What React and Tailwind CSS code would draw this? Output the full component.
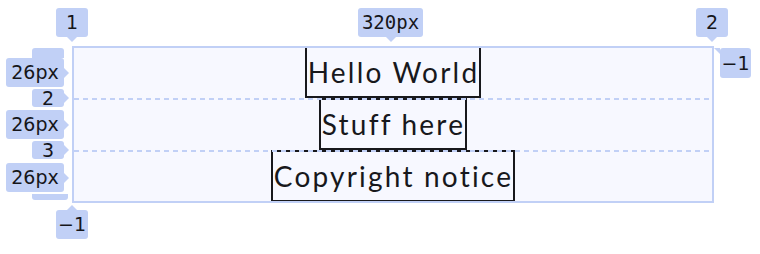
import React from 'react';

const chip = 'relative flex items-center justify-center rounded-[3px] bg-[#c1d0f6] text-[#16161a] leading-none text-[19px] font-["DejaVu_Sans",sans-serif]';
const downTip = 'absolute left-1/2 -translate-x-1/2 top-full w-0 h-0 border-x-[5px] border-x-transparent border-t-[5px] border-t-[#c1d0f6]';
const upTip = 'absolute left-1/2 -translate-x-1/2 bottom-full w-0 h-0 border-x-[5px] border-x-transparent border-b-[5px] border-b-[#c1d0f6]';
const rightTip = 'absolute top-1/2 -translate-y-1/2 left-full w-0 h-0 border-y-[5px] border-y-transparent border-l-[5px] border-l-[#c1d0f6]';

const Item = ({ children }) => (
  <div className="h-[52px] flex items-center border-2 border-[#18181c] pl-[1px] tracking-[2.2px]">{children}</div>
);

const App = () => {
  return (
    <div className="relative w-[760px] h-[254px] bg-white overflow-hidden">
      {/* the grid itself */}
      <div className="relative ml-[72px] mt-[46px] w-[642px] flex flex-col items-center bg-[#f7f8ff] font-['Lato',sans-serif] text-[28px] text-[#18181c]">
        <Item>Hello World</Item>
        <Item>Stuff here</Item>
        <Item>Copyright notice</Item>

        {/* overlay: outline and row lines */}
        <div className="absolute left-0 top-0 w-[642px] h-[157px] border-2 border-[#c1d0f6] flex flex-col pt-[50px] gap-[50px] pointer-events-none">
          <div className="h-[2px] bg-[repeating-linear-gradient(90deg,#c1d0f6_0_5px,transparent_5px_9px)]" />
          <div className="h-[2px] bg-[repeating-linear-gradient(90deg,#c1d0f6_0_5px,transparent_5px_9px)]" />
        </div>
      </div>

      {/* column line labels */}
      <div className={`${chip} !absolute left-[56px] top-[8px] w-[32px] h-[29px]`}>1<span className={downTip} /></div>
      <div className={`${chip} !absolute left-[358px] top-[8px] w-[65px] h-[29px] !font-['DejaVu_Sans_Mono',monospace]`}>320px<span className={downTip} /></div>
      <div className={`${chip} !absolute left-[696px] top-[8px] w-[32px] h-[29px]`}>2<span className={downTip} /></div>
      <div className={`${chip} !absolute left-[720px] top-[48px] w-[31px] h-[30px]`}>
        −1
        <span className="absolute right-full top-0 w-0 h-0 border-b-[6px] border-b-transparent border-r-[6px] border-r-[#c1d0f6]" />
      </div>
      <div className={`${chip} !absolute left-[56px] top-[210px] w-[32px] h-[29px]`}>−1<span className={upTip} /></div>

      {/* row labels down the left edge */}
      <div className="absolute left-[6px] top-[48px] w-[58px] flex flex-col items-end">
        <div className={`${chip} w-[32px] h-[10px] rounded-b-none`} />
        <div className={`${chip} w-[58px] h-[29px]`}>26px<span className={rightTip} /></div>
        <div className={`${chip} mt-[2px] w-[32px] h-[18px]`}>2<span className={rightTip} /></div>
        <div className={`${chip} mt-[3px] w-[58px] h-[29px]`}>26px<span className={rightTip} /></div>
        <div className={`${chip} mt-[2px] w-[32px] h-[18px]`}>3<span className={rightTip} /></div>
        <div className={`${chip} mt-[4px] w-[58px] h-[29px]`}>26px<span className={rightTip} /></div>
        <div className={`${chip} mt-[2px] -mr-[4px] w-[36px] h-[6px] rounded-t-none`} />
      </div>
    </div>
  );
};

export default App;
